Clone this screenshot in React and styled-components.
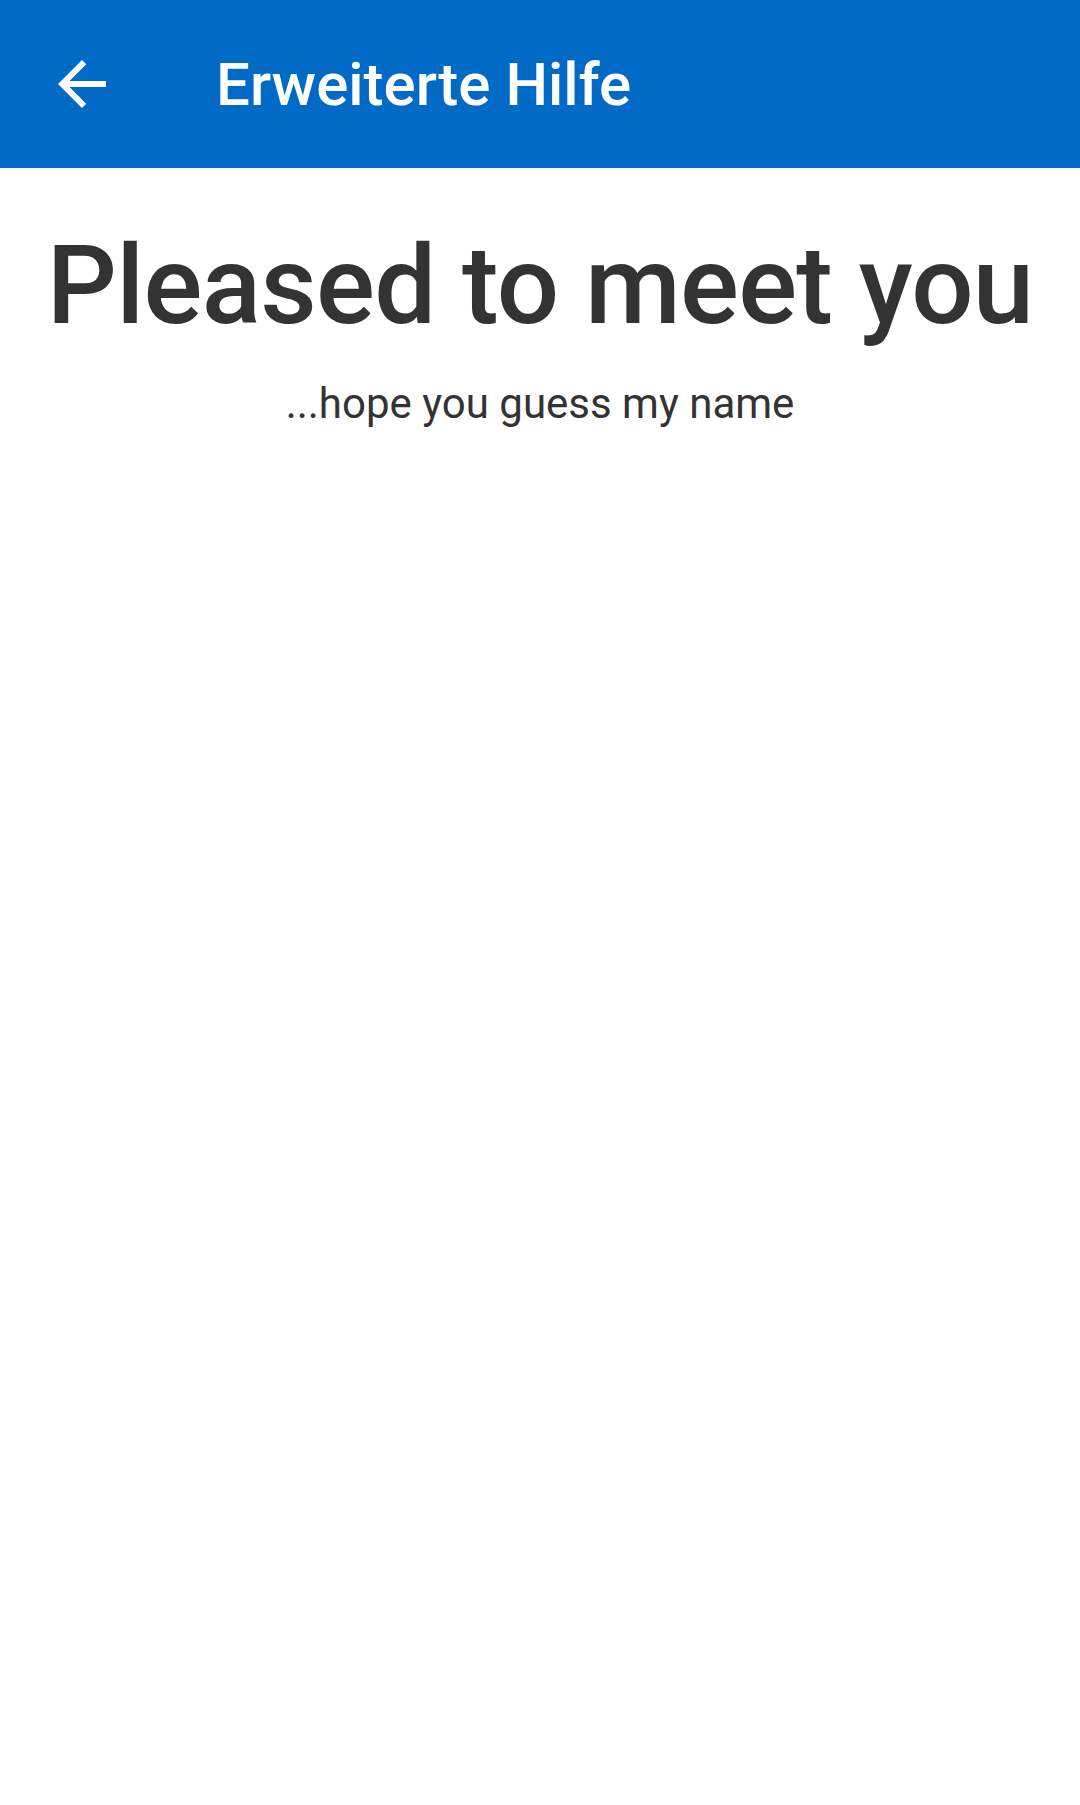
import styled, { createGlobalStyle } from "styled-components"

const Global = createGlobalStyle`
    html, body {
        margin: 0;
        padding: 0;
        background: #ffffff;
        font-family: Roboto, "Noto Sans", sans-serif;
    }
`
const Container = styled.div`
    width: 1080px;
    min-height: 1805px;
    background: #ffffff;
`
const Toolbar = styled.div`
    display: flex;
    align-items: center;
    height: 168px;
    background: #006ac6;
    color: #ffffff;
`
const BackButton = styled.div`
    display: flex;
    align-items: center;
    justify-content: center;
    width: 72px;
    height: 72px;
    margin-left: 46px;
    margin-right: 98px;
`
const Title = styled.span`
    font-size: 60px;
    font-weight: 500;
`
const Content = styled.div`
    display: flex;
    flex-direction: column;
    align-items: center;
    padding-top: 63px;
    color: #333333;
`
const Heading = styled.h1`
    margin: 0;
    font-size: 110px;
    font-weight: 500;
    line-height: 1;
    letter-spacing: -0.75px;
    white-space: nowrap;
`
const Subtitle = styled.p`
    margin: 0;
    margin-top: 42px;
    font-size: 42px;
    font-weight: 400;
    line-height: 1;
`

const App = () => {
    return(
        <Container>
            <Global />
            <Toolbar>
                <BackButton>
                    <svg width="72" height="72" viewBox="0 0 24 24">
                        <path d="M20 11H7.83l5.59-5.59L12 4l-8 8 8 8 1.41-1.41L7.83 13H20v-2z" fill="#ffffff" />
                    </svg>
                </BackButton>
                <Title>Erweiterte Hilfe</Title>
            </Toolbar>
            <Content>
                <Heading>Pleased to meet you</Heading>
                <Subtitle>...hope you guess my name</Subtitle>
            </Content>
        </Container>
    )
}

export default App
